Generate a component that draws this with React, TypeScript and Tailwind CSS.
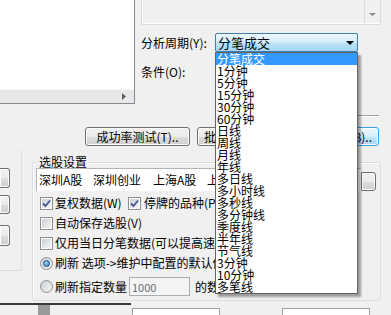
import type { ReactNode } from "react";
import clsx from "clsx";

const periods = [
  "分笔成交",
  "1分钟",
  "5分钟",
  "15分钟",
  "30分钟",
  "60分钟",
  "日线",
  "周线",
  "月线",
  "年线",
  "多日线",
  "多小时线",
  "多秒线",
  "多分钟线",
  "季度线",
  "半年线",
  "节气线",
  "3分钟",
  "10分钟",
  "多笔线",
];

function Button({
  children,
  focused,
  className,
}: {
  children: ReactNode;
  focused?: boolean;
  className?: string;
}) {
  return (
    <div
      className={clsx(
        "flex h-[19px] shrink-0 items-center justify-center whitespace-nowrap rounded-[3px] border shadow-[inset_0_0_0_1px_#fbfbfb]",
        focused
          ? "border-[#3c9ee0] bg-[linear-gradient(to_bottom,#eaf6fd_0%,#d9f0fc_50%,#bee6fd_51%,#a7d9f5_100%)]"
          : "border-[#707070] bg-[linear-gradient(to_bottom,#f2f2f2_0%,#ebebeb_50%,#dddddd_51%,#cfcfcf_100%)]",
        className,
      )}
    >
      {children}
    </div>
  );
}

function Checkbox({ checked }: { checked?: boolean }) {
  return (
    <span className="flex size-[13px] shrink-0 items-center justify-center border border-[#8e8f8f] bg-white">
      <span className="flex size-[9px] items-center justify-center bg-[linear-gradient(135deg,#cbcfd5,#f6f6f6)]">
        {checked && (
          <svg width="9" height="9" viewBox="0 0 9 9">
            <path
              d="M1 4.5 L3.5 7 L8 1.5"
              fill="none"
              stroke="#3b5998"
              strokeWidth="1.8"
            />
          </svg>
        )}
      </span>
    </span>
  );
}

function Radio({ checked }: { checked?: boolean }) {
  return (
    <span className="flex size-[13px] shrink-0 items-center justify-center rounded-full border border-[#8e8f8f] bg-[linear-gradient(135deg,#cbcfd5,#f6f6f6)]">
      {checked && (
        <span className="size-[7px] rounded-full border border-[#1c4e80] bg-[radial-gradient(circle_at_40%_40%,#9ad8fb,#2a7bc0)]" />
      )}
    </span>
  );
}

export default function App() {
  return (
    <div className="relative flex h-[315px] w-[391px] flex-col overflow-hidden bg-[#f0f0f0] font-['Noto_Sans_CJK_SC',sans-serif] text-[12px] leading-[16px] text-black">
      {/* 上部：列表 + 分析周期 */}
      <div className="flex h-[104px] shrink-0">
        <div className="flex w-[135px] flex-col border-r border-b border-[#828790]">
          <div className="flex-1 bg-white" />
          <div className="flex h-[14px] items-center justify-end border-t border-[#f7f7f7] bg-[#e8e8e8] pr-[8px]">
            <svg width="4" height="7" viewBox="0 0 4 7">
              <path d="M0 0 L4 3.5 L0 7 Z" fill="#606060" />
            </svg>
          </div>
        </div>

        <div className="ml-[6px] flex w-[240px] flex-col">
          <div className="flex h-[25px] border-x border-b border-[#dcdcdc] shadow-[inset_1px_0_0_#ffffff,inset_0_-1px_0_#ffffff]">
            <div className="flex-1" />
            <div className="flex w-[16px] items-end justify-center border-l border-[#dcdcdc] pb-[8px]">
              <svg width="7" height="3" viewBox="0 0 7 3">
                <path d="M0 0 H7 L3.5 3 Z" fill="#8a8a8a" />
              </svg>
            </div>
          </div>

          <div className="mt-[8px] flex h-[19px] items-center">
            <span className="w-[74px] whitespace-nowrap">分析周期(Y):</span>
            <div className="flex h-[19px] w-[143px] items-center justify-between rounded-[2px] border border-[#3c7fb1] bg-[linear-gradient(to_bottom,#eef8fe_0%,#d6effc_45%,#bde4f8_55%,#a2d6f2_100%)] pl-[2px] pr-[3px]">
              <span className="text-[13px]">分笔成交</span>
              <svg width="8" height="4" viewBox="0 0 8 4">
                <path d="M0 0 H8 L4 4 Z" fill="#000" />
              </svg>
            </div>
          </div>

          <div className="mt-[12px] flex h-[16px] items-center">条件(O):</div>
        </div>
      </div>

      {/* 分隔线 */}
      <div className="ml-[358px] mt-[11px] h-[2px] w-[21px] shrink-0 border-t border-b border-t-[#a0a0a0] border-b-white" />

      {/* 按钮行 */}
      <div className="mt-[10px] flex h-[19px] shrink-0">
        <Button className="ml-[85px] w-[105px]">成功率测试(T)..</Button>
        <Button className="ml-[7px] w-[105px] justify-start pl-[6px]">批量测试(P)..</Button>
        <Button focused className="ml-[5px] w-[72px] justify-end pr-[6px]">
          执行(B)..
        </Button>
      </div>

      {/* 下部：左栏 + 选股设置 */}
      <div className="flex shrink-0">
        <div className="mt-[4px] flex h-[121px] w-[22px] flex-col rounded-br-[3px] border-r border-b border-[#d5dfe5]">
          <Button className="mt-[18px] h-[20px] w-[10px] rounded-l-none border-l-0"> </Button>
          <Button className="mt-[7px] h-[14px] w-[10px] rounded-l-none border-l-0"> </Button>
          <Button className="mt-[11px] h-[21px] w-[10px] rounded-l-none border-l-0"> </Button>
        </div>

        <fieldset className="ml-[10px] mt-[10px] h-[145px] w-[349px] rounded-[3px] border border-[#d5dfe5] shadow-[inset_1px_1px_0_#ffffff]">
          <legend className="ml-[4px] bg-[#f0f0f0] px-[2px] leading-[12px]">选股设置</legend>
          <div className="flex flex-col">
            <div className="ml-[3px] flex h-[23px] w-[340px] items-stretch">
              <div className="flex flex-1 items-center border-t border-l border-[#b5b5b5] bg-white pl-[2px] whitespace-nowrap">
                <span className="w-[54px]">深圳A股</span>
                <span className="w-[60px]">深圳创业</span>
                <span className="w-[54px]">上海A股</span>
                <span>上海</span>
              </div>
              <Button className="mt-[4px] h-[18px] w-[15px] rounded-l-none"> </Button>
            </div>

            <div className="ml-[7px] mt-[4px] flex h-[16px] items-center whitespace-nowrap">
              <div className="flex w-[88px] items-center gap-[2px]">
                <Checkbox checked />
                <span>复权数据(W)</span>
              </div>
              <div className="flex items-center gap-[3px]">
                <Checkbox checked />
                <span>停牌的品种(P)</span>
              </div>
            </div>

            <div className="ml-[7px] mt-[4px] flex h-[16px] items-center gap-[2px] whitespace-nowrap">
              <Checkbox />
              <span>自动保存选股(V)</span>
            </div>

            <div className="ml-[7px] mt-[4px] flex h-[16px] items-center gap-[2px] whitespace-nowrap">
              <Checkbox />
              <span>仅用当日分笔数据(可以提高速度)</span>
            </div>

            <div className="ml-[7px] mt-[4px] flex h-[16px] items-center gap-[2px] whitespace-nowrap">
              <Radio checked />
              <span>刷新 选项-&gt;维护中配置的默认值</span>
            </div>

            <div className="ml-[7px] mt-[6px] flex h-[19px] items-center whitespace-nowrap">
              <Radio />
              <span className="ml-[2px] w-[74px]">刷新指定数量</span>
              <div className="flex h-[19px] w-[61px] items-center border border-[#abadb3] bg-[#f4f4f4] pl-[2px] text-[11px] text-[#6d6d6d]">
                1000
              </div>
              <span className="ml-[5px]">的数据</span>
            </div>
          </div>
        </fieldset>
      </div>

      {/* 底部 */}
      <div className="mt-[2px] flex h-[12px] shrink-0">
        <div className="w-[131px] border-t-2 border-[#3a3a3a]">
          <div className="ml-[38px] h-[10px] w-[12px] bg-[#9a9a9a]" />
        </div>
        <div className="ml-[1px] mt-[5px] w-[88px] border-t border-r border-l border-[#a0a0a0] bg-white" />
        <div className="ml-[62px] mt-[5px] w-[88px] border-t border-r border-l border-[#a0a0a0] bg-white" />
      </div>

      {/* 下拉列表 */}
      <ul className="absolute left-[215px] top-[52px] w-[143px] border border-[#646464] bg-white text-[12px] leading-[12px] shadow-[3px_3px_2px_rgba(0,0,0,0.35)]">
        {periods.map((p, i) => (
          <li
            key={p}
            className={clsx(
              "h-[12px] whitespace-nowrap pl-[1px]",
              i === 0 && "bg-[#3399ff] text-white",
            )}
          >
            {p}
          </li>
        ))}
      </ul>
    </div>
  );
}
